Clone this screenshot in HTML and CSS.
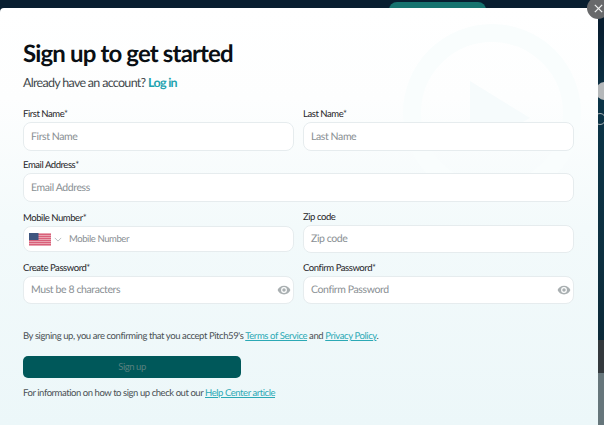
FILE: index.html
```html
<!DOCTYPE html>
<html lang="en">
<head>
<meta charset="utf-8">
<title>Sign up</title>
<link rel="stylesheet" href="styles.css">
</head>
<body>
<div class="backdrop">
  <div class="tab"></div>
  <div class="side-avatar"></div>
  <div class="side-ring"></div>
  <div class="side-bar"></div>
  <div class="side-thumb"></div>
  <main class="modal">
    <svg class="watermark" viewBox="0 0 180 180" aria-hidden="true">
      <circle cx="90" cy="90" r="80" fill="none" stroke="#f9fdfd" stroke-width="18"/>
      <path d="M68 58 L128 95 L68 128 Z" fill="#f6fbfc"/>
    </svg>
    <h1 class="title">Sign up to get started</h1>
    <p class="subtitle">Already have an account? <a class="login" href="#">Log in</a></p>
    <form class="form">
      <div class="row row-name">
        <div class="field"><label class="label">First Name*</label><div class="input"><span class="ph">First Name</span></div></div>
        <div class="field"><label class="label">Last Name*</label><div class="input"><span class="ph">Last Name</span></div></div>
      </div>
      <div class="row-single">
        <div class="field"><label class="label">Email Address*</label><div class="input"><span class="ph">Email Address</span></div></div>
      </div>
      <div class="row row-mobile">
        <div class="field field-mobile"><label class="label">Mobile Number*</label>
          <div class="input input-phone">
            <svg class="flag" viewBox="0 0 22 13" aria-hidden="true">
              <rect width="22" height="13" fill="#e9a3b0"/>
              <path d="M0 1.5H22M0 3.500H22M0 5.500H22M0 7.500H22M0 9.500H22M0 11.500H22" stroke="#d9607a" stroke-width="1"/>
              <rect width="9.500" height="7" fill="#3f5680"/>
            </svg>
            <svg class="chev" viewBox="0 0 10 6" aria-hidden="true"><path d="M1 1l4 4 4-4" fill="none" stroke="#a9b2b6" stroke-width="1"/></svg>
            <span class="ph ph-phone">Mobile Number</span>
          </div>
        </div>
        <div class="field"><label class="label">Zip code</label><div class="input input-zip"><span class="ph">Zip code</span></div></div>
      </div>
      <div class="row row-pass">
        <div class="field"><label class="label">Create Password*</label><div class="input input-pass"><span class="ph">Must be 8 characters</span>
          <svg class="eye" viewBox="0 0 24 24" aria-hidden="true"><path d="M12 4.500C7 4.500 2.700 7.600 1 12c1.700 4.400 6 7.500 11 7.500s9.300-3.100 11-7.500c-1.700-4.400-6-7.500-11-7.500zm0 12.500a5 5 0 1 1 0-10 5 5 0 0 1 0 10zm0-8a3 3 0 1 0 0 6 3 3 0 0 0 0-6z" fill="#a9afb1"/></svg>
        </div></div>
        <div class="field"><label class="label">Confirm Password*</label><div class="input input-pass"><span class="ph">Confirm Password</span>
          <svg class="eye" viewBox="0 0 24 24" aria-hidden="true"><path d="M12 4.500C7 4.500 2.700 7.600 1 12c1.700 4.400 6 7.500 11 7.500s9.300-3.100 11-7.500c-1.700-4.400-6-7.500-11-7.500zm0 12.500a5 5 0 1 1 0-10 5 5 0 0 1 0 10zm0-8a3 3 0 1 0 0 6 3 3 0 0 0 0-6z" fill="#a9afb1"/></svg>
        </div></div>
      </div>
      <p class="terms">By signing up, you are confirming that you accept Pitch59's <a class="link" href="#">Terms of Service</a> and <a class="link" href="#">Privacy Policy</a>.</p>
      <button class="submit" type="button">Sign up</button>
      <p class="help">For information on how to sign up check out our <a class="link" href="#">Help Center article</a></p>
    </form>
  </main>
  <button class="close" type="button" aria-label="Close">
    <svg viewBox="0 0 12 12" aria-hidden="true"><path d="M2 2l8 8M10 2l-8 8" stroke="#eef0f0" stroke-width="1.400" fill="none"/></svg>
  </button>
</div>
</body>
</html>
```
FILE: styles.css
```css
* { box-sizing: border-box; }
html, body { margin: 0; padding: 0; height: 100%; overflow: hidden; }
body { font-family: "Lato", sans-serif; background: #081e30; text-rendering: geometricPrecision; }

.backdrop { position: relative; width: 604px; height: 425px; padding-top: 8px; background: linear-gradient(180deg, #081e30 0, #081e30 30px, #0b3447 100px, #0d3040 260px, #0a2230 100%); }

.tab { position: absolute; left: 389px; top: 2px; width: 97px; height: 10px; background: #16736f; border-radius: 8px 8px 0 0; }
.side-avatar { position: absolute; left: 596px; top: 82px; width: 16px; height: 18px; border-radius: 50%; background: #b5b8ba; }
.side-ring { position: absolute; left: 594px; top: 113px; width: 12px; height: 12px; border-radius: 50%; border: 1px solid #a9b2b6; }
.side-bar { position: absolute; left: 598px; top: 340px; width: 6px; height: 33px; background: #33393d; }
.side-thumb { position: absolute; left: 598px; top: 373px; width: 6px; height: 52px; background: #66767b; }

.modal { position: relative; width: 598px; height: 417px; padding: 29px 24px 0 23px; border-radius: 4px 0 0 0; overflow: hidden; background: linear-gradient(180deg, #ffffff 0, #fdfefe 90px, #f3fafb 220px, #ecf7f9 100%); }

.watermark { position: absolute; left: 402px; top: 15px; width: 180px; height: 180px; }

.title { position: relative; margin: 0; font-size: 24px; line-height: 33px; font-weight: 700; letter-spacing: -0.85px; color: #0a0f14; }
.subtitle { position: relative; margin: 1px 0 0; font-size: 12.500px; line-height: 24px; letter-spacing: -0.7px; color: #42484c; }
.login { color: #22a3b0; font-weight: 700; text-decoration: none; }

.form { position: relative; margin: 0; }
.row { display: grid; grid-template-columns: 271px 271px; column-gap: 9px; }
.row-name { margin-top: 11px; }
.row-single { margin-top: 6px; width: 551px; }
.row-mobile { margin-top: 7px; }
.row-pass { margin-top: 7px; }

.label { display: block; height: 16px; font-size: 9.500px; line-height: 18px; letter-spacing: -0.44px; color: #1f2428; }
.input { display: flex; align-items: center; height: 29px; padding: 0 7px; background: #fff; border: 1px solid #e6ecee; border-radius: 8px; }
.field-mobile .label { margin-top: 1px; }
.field-mobile .input { height: 26px; margin-top: 0; padding-left: 5px; }
.input-zip { height: 28px; }
.input-pass { justify-content: space-between; height: 28px; padding-right: 2px; }

.ph { font-size: 10.500px; letter-spacing: -0.4px; color: #8a9094; }
.ph-phone { font-size: 9.500px; letter-spacing: -0.42px; margin-left: 7px; }

.flag { width: 22px; height: 13px; flex: none; }
.chev { width: 8px; height: 5px; margin-left: 3px; flex: none; }
.eye { width: 14px; height: 14px; flex: none; }

.terms { margin: 26px 0 0; font-size: 9.500px; line-height: 14px; letter-spacing: -0.41px; color: #4a5054; }
.link { color: #2ba9b5; text-decoration: underline; }
.submit { display: block; width: 218px; height: 22px; margin-top: 12px; padding: 0; border: 0; border-radius: 5px; background: #00585a; color: #58807f; font: 9.500px/22px "Lato", sans-serif; letter-spacing: -0.45px; }
.help { margin: 9px 0 0; font-size: 9.500px; line-height: 14px; letter-spacing: -0.44px; color: #4a5054; }

.close { position: absolute; left: 587px; top: -3px; width: 22px; height: 22px; padding: 0; border: 0; border-radius: 50%; background: #68696b; display: flex; align-items: center; justify-content: center; }
.close svg { width: 11px; height: 11px; }
```
